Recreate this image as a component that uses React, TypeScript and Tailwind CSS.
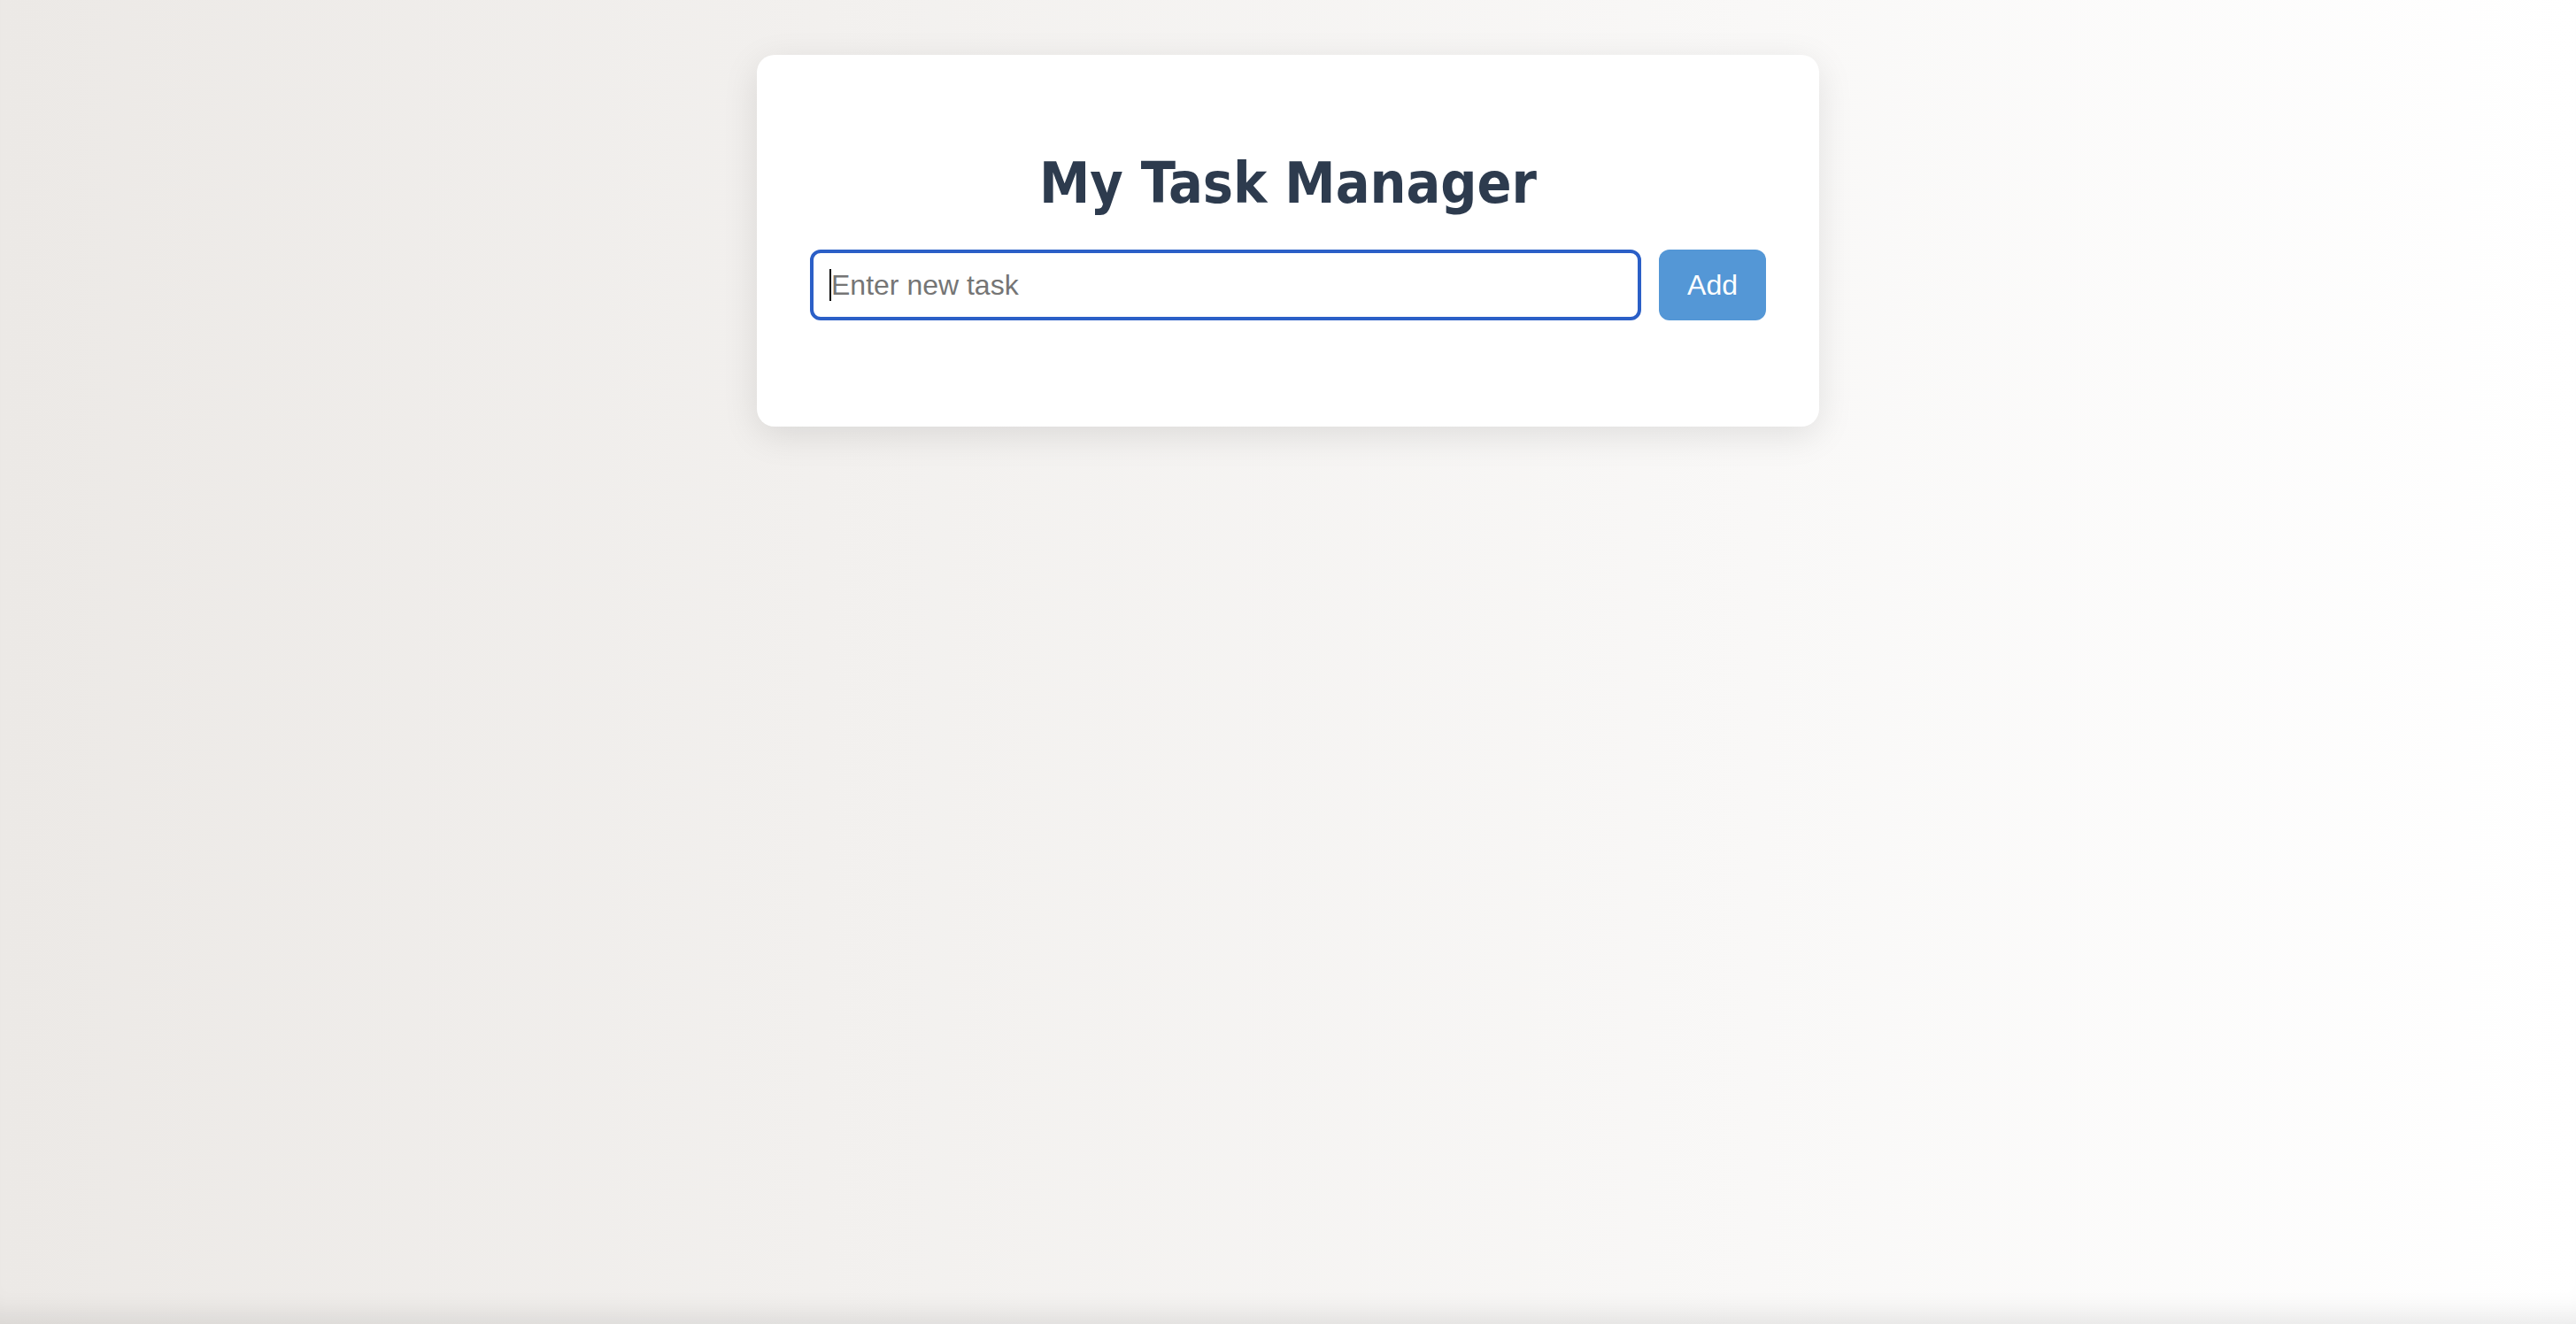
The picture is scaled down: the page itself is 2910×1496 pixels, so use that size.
import { useState } from 'react'

export default function App() {
  const [task, setTask] = useState('')

  return (
    <div className="min-h-screen w-full bg-[linear-gradient(to_right,#ece9e6,#ffffff)] pt-[62px] shadow-[inset_0_-34px_30px_-24px_rgba(0,0,0,0.09)]">
      {/* Card */}
      <div className="mx-auto w-[1200px] rounded-[20px] bg-white px-[60px] pt-[60px] pb-[120px] shadow-[0_10px_40px_rgba(0,0,0,0.1)]">
        <h1 className="mt-[48px] mb-[37px] text-center font-['DejaVu_Sans_Condensed','DejaVu_Sans',sans-serif] text-[64px] leading-[75px] font-bold font-stretch-condensed text-[#2d3b4e]">
          My Task Manager
        </h1>

        <div className="flex items-center gap-[20px]">
          <div className="relative flex-1">
            <input
              type="text"
              value={task}
              onChange={(e) => setTask(e.target.value)}
              placeholder="Enter new task"
              className="h-[80px] w-full rounded-[12px] border-4 border-[#2b5fc7] px-[20px] font-['Liberation_Sans',Arial,sans-serif] text-[32px] text-[#222] outline-none placeholder:text-[#757575]"
            />
            {task === '' && (
              <span className="pointer-events-none absolute top-[22px] left-[22px] h-[36px] w-[2px] bg-black" />
            )}
          </div>

          <button className="h-[80px] w-[121px] rounded-[12px] bg-[#5497d6] font-['Liberation_Sans',Arial,sans-serif] text-[32px] text-white">
            Add
          </button>
        </div>
      </div>
    </div>
  )
}
